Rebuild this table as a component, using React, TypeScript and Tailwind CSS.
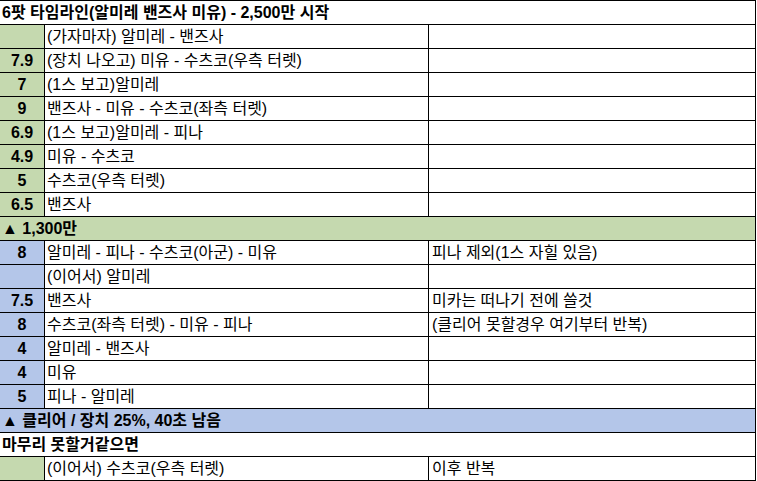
import React from "react";

type Row =
  | { kind: "full"; text: string; bg: string }
  | { kind: "row"; num: string; text: string; note?: string; bg: string };

const G = "bg-[#c5d9af]";
const B = "bg-[#b4c6e9]";
const W = "bg-white";

const rows: Row[] = [
  { kind: "full", text: "6팟 타임라인(알미레 밴즈사 미유) - 2,500만 시작", bg: W },
  { kind: "row", num: "", text: "(가자마자) 알미레 - 밴즈사", bg: G },
  { kind: "row", num: "7.9", text: "(장치 나오고) 미유 - 수츠코(우측 터렛)", bg: G },
  { kind: "row", num: "7", text: "(1스 보고)알미레", bg: G },
  { kind: "row", num: "9", text: "밴즈사 - 미유 - 수츠코(좌측 터렛)", bg: G },
  { kind: "row", num: "6.9", text: "(1스 보고)알미레 - 피나", bg: G },
  { kind: "row", num: "4.9", text: "미유 - 수츠코", bg: G },
  { kind: "row", num: "5", text: "수츠코(우측 터렛)", bg: G },
  { kind: "row", num: "6.5", text: "밴즈사", bg: G },
  { kind: "full", text: "▲ 1,300만", bg: G },
  { kind: "row", num: "8", text: "알미레 - 피나 - 수츠코(아군) - 미유", note: "피나 제외(1스 자힐 있음)", bg: B },
  { kind: "row", num: "", text: "(이어서) 알미레", bg: B },
  { kind: "row", num: "7.5", text: "밴즈사", note: "미카는 떠나기 전에 쓸것", bg: B },
  { kind: "row", num: "8", text: "수츠코(좌측 터렛) - 미유 - 피나", note: "(클리어 못할경우 여기부터 반복)", bg: B },
  { kind: "row", num: "4", text: "알미레 - 밴즈사", bg: B },
  { kind: "row", num: "4", text: "미유", bg: B },
  { kind: "row", num: "5", text: "피나 - 알미레", bg: B },
  { kind: "full", text: "▲ 클리어 / 장치 25%, 40초 남음", bg: B },
  { kind: "full", text: "마무리 못할거같으면", bg: W },
  { kind: "row", num: "", text: "(이어서) 수츠코(우측 터렛)", note: "이후 반복", bg: G },
];

export default function App() {
  return (
    <div
      className="w-[757px] h-[481px] bg-white text-black overflow-hidden"
      style={{ fontFamily: '"Liberation Sans", "Noto Sans CJK KR", sans-serif' }}
    >
      <div className="w-[756px] border-t border-r border-black">
        {rows.map((r, i) =>
          r.kind === "full" ? (
            <div
              key={i}
              className={`h-[24px] border-b border-black flex items-center pl-[2px] text-[16px] font-bold whitespace-pre ${r.bg}`}
            >
              {r.text}
            </div>
          ) : (
            <div key={i} className="h-[24px] border-b border-black flex">
              <div
                className={`w-[45px] border-r border-black flex items-center justify-center text-[16px] font-bold ${r.bg}`}
              >
                {r.num}
              </div>
              <div className="w-[384px] border-r border-black flex items-center pl-[2px] text-[16px] whitespace-pre bg-white">
                {r.text}
              </div>
              <div className="flex-1 flex items-center pl-[3px] text-[16px] whitespace-pre bg-white">
                {r.note ?? ""}
              </div>
            </div>
          )
        )}
      </div>
    </div>
  );
}
